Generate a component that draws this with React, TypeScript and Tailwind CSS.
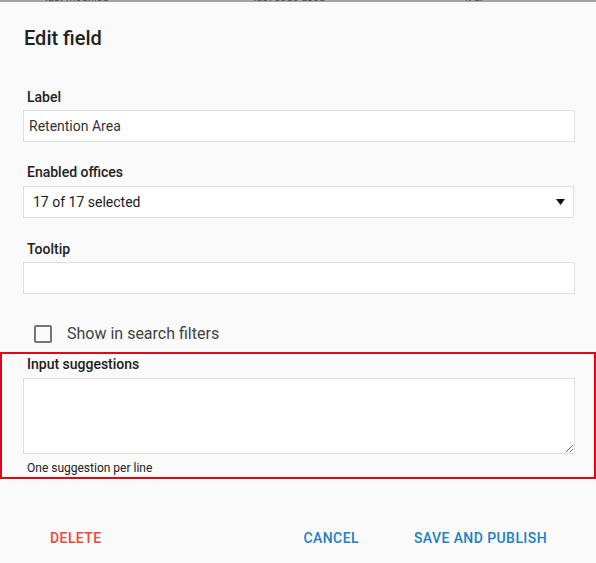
import { useState } from "react";

function FieldLabel({ children }: { children: string }) {
  return <div className="pl-[4px] text-[14px] font-medium leading-5 text-[#212121]">{children}</div>;
}

export default function App() {
  const [label, setLabel] = useState("Retention Area");
  const [tooltip, setTooltip] = useState("");
  const [suggestions, setSuggestions] = useState("");
  const [inFilters, setInFilters] = useState(false);

  return (
    <div className="min-h-[563px] w-[596px] bg-[#fafafa] font-['Roboto',sans-serif]">
      {/* strip of the page behind the dialog */}
      <div className="h-[2px] overflow-hidden bg-[#a3a3a3]">
        <div className="-mt-[8px] flex text-[11px] leading-[11px] text-[#3a4a6a]">
          <span className="ml-[45px]">last modified</span>
          <span className="ml-[145px]">last code used</span>
          <span className="ml-[140px]">it al</span>
        </div>
      </div>

      <div className="px-[23px] pr-[21px]">
        <h2 className="pt-[24px] pl-[1px] text-[20px] font-medium leading-6 text-[#212121]">Edit field</h2>

        <div className="mt-[37px]">
          <FieldLabel>Label</FieldLabel>
          <input
            value={label}
            onChange={(e) => setLabel(e.target.value)}
            className="mt-[3px] h-[32px] w-full border border-[#e0e0e0] bg-white px-[5px] text-[14px] text-[#333] outline-none"
          />
        </div>

        <div className="mt-[20px]">
          <FieldLabel>Enabled offices</FieldLabel>
          <div className="mt-[4px] flex h-[32px] w-[551px] items-center justify-between border border-[#e0e0e0] bg-white pr-[8px] pl-[9px] text-[14px] text-[#212121]">
            <span>17 of 17 selected</span>
            <svg width="9" height="7" viewBox="0 0 9 7">
              <polygon points="0,0 9,0 4.5,6" fill="#111" />
            </svg>
          </div>
        </div>

        <div className="mt-[21px]">
          <FieldLabel>Tooltip</FieldLabel>
          <input
            value={tooltip}
            onChange={(e) => setTooltip(e.target.value)}
            className="mt-[3px] h-[32px] w-full border border-[#e0e0e0] bg-white px-[5px] text-[14px] text-[#333] outline-none"
          />
        </div>

        <label className="mt-[30px] flex cursor-pointer items-center pl-[11px]">
          <span
            onClick={() => setInFilters(!inFilters)}
            className="h-[18px] w-[18px] rounded-[2px] border-2 border-[#757575]"
          />
          <span className="ml-[15px] text-[16px] leading-5 text-[#424242]">Show in search filters</span>
        </label>
      </div>

      <div className="mt-[8px] h-[127px] w-[596px] border-2 border-[#e30613] pr-[19px] pl-[21px]">
        <FieldLabel>Input suggestions</FieldLabel>
        <textarea
          value={suggestions}
          onChange={(e) => setSuggestions(e.target.value)}
          className="mt-[4px] block h-[76px] w-full border border-[#e0e0e0] bg-white px-[5px] text-[14px] outline-none"
        />
        <div className="mt-[6px] pl-[4px] text-[12px] leading-4 text-[#212121]">One suggestion per line</div>
      </div>

      <div className="mt-[41px] flex items-center justify-between pr-[33px] pl-[34px]">
        <button className="px-4 py-2 text-[14px] font-medium tracking-[0.03em] text-[#f44336] uppercase">Delete</button>
        <div className="flex gap-[23px]">
          <button className="px-4 py-2 text-[14px] font-medium tracking-[0.03em] text-[#1b80c4] uppercase">Cancel</button>
          <button className="px-4 py-2 text-[14px] font-medium tracking-[0.03em] text-[#1b80c4] uppercase">Save and publish</button>
        </div>
      </div>
    </div>
  );
}
